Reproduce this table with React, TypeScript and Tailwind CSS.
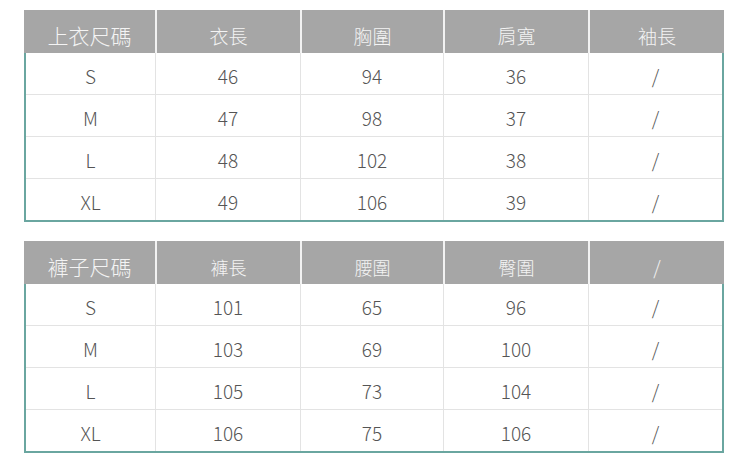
const headCols = "grid grid-cols-[131px_145px_143px_145px_136px]";
const bodyCols = "grid grid-cols-[129px_145px_143px_145px_134px]";

type Head = { label: string; size: string };

const tops: Head[] = [
  { label: "上衣尺碼", size: "text-[21px]" },
  { label: "衣長", size: "text-[19px]" },
  { label: "胸圍", size: "text-[19px]" },
  { label: "肩寬", size: "text-[19px]" },
  { label: "袖長", size: "text-[19px]" },
];

const bottoms: Head[] = [
  { label: "褲子尺碼", size: "text-[21px]" },
  { label: "褲長", size: "text-[18px]" },
  { label: "腰圍", size: "text-[18px]" },
  { label: "臀圍", size: "text-[18px]" },
  { label: "/", size: "text-[19px]" },
];

const topRows = [
  ["S", "46", "94", "36", "/"],
  ["M", "47", "98", "37", "/"],
  ["L", "48", "102", "38", "/"],
  ["XL", "49", "106", "39", "/"],
];

const bottomRows = [
  ["S", "101", "65", "96", "/"],
  ["M", "103", "69", "100", "/"],
  ["L", "105", "73", "104", "/"],
  ["XL", "106", "75", "106", "/"],
];

function SizeTable({ head, rows }: { head: Head[]; rows: string[][] }) {
  return (
    <div className="w-[700px]">
      <div className={`${headCols} h-[43px] bg-[#a6a6a6]`}>
        {head.map((h, i) => (
          <div
            key={h.label + i}
            className={`flex items-center justify-center pt-[8px] font-light leading-none text-[#f4f4f4] ${h.size} ${
              i > 0 ? "border-l-2 border-[#f2f2f2]" : ""
            }`}
          >
            {h.label}
          </div>
        ))}
      </div>
      <div className="border-x-2 border-b-2 border-[#6aa6a0] bg-white">
        {rows.map((r, ri) => (
          <div key={ri} className={`${bodyCols} ${ri > 0 ? "border-t border-[#e3e3e3]" : ""}`}>
            {r.map((c, ci) => (
              <div
                key={ci}
                className={`flex h-[41px] items-center justify-center pt-[4px] text-[19px] font-light leading-none text-[#555] ${
                  ci > 0 ? "border-l border-[#e3e3e3]" : ""
                }`}
              >
                {c}
              </div>
            ))}
          </div>
        ))}
      </div>
    </div>
  );
}

export default function App() {
  return (
    <div
      className="flex min-h-[471px] w-[750px] flex-col gap-[19px] bg-white pl-[24px] pt-[10px]"
      style={{ fontFamily: '"Noto Sans CJK TC", "Noto Sans", sans-serif' }}
    >
      <SizeTable head={tops} rows={topRows} />
      <SizeTable head={bottoms} rows={bottomRows} />
    </div>
  );
}
